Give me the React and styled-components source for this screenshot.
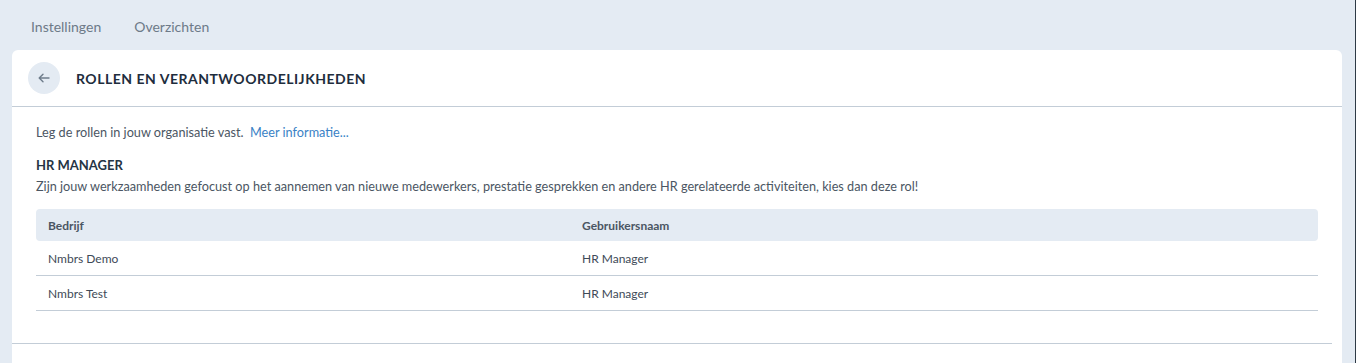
import React from "react";
import styled, { createGlobalStyle } from "styled-components";

const GlobalStyle = createGlobalStyle`
  html, body {
    margin: 0;
    padding: 0;
    background: #e4ebf3;
    font-family: Lato, "Open Sans", sans-serif;
  }
`;

const rows = [
  { company: "Nmbrs Demo", user: "HR Manager" },
  { company: "Nmbrs Test", user: "HR Manager" },
];

export default function App() {
  return (
    <Page>
      <GlobalStyle />
      <Tabs>
        <Tab>Instellingen</Tab>
        <Tab>Overzichten</Tab>
      </Tabs>
      <Card>
        <Header>
          <BackButton aria-label="Terug">
            <svg width="14" height="14" viewBox="0 0 14 14" fill="none">
              <path
                d="M12 7H2.5M6 3.2L2.2 7L6 10.8"
                stroke="#6f7d8c"
                strokeWidth="1.4"
                strokeLinecap="round"
                strokeLinejoin="round"
              />
            </svg>
          </BackButton>
          <Title>ROLLEN EN VERANTWOORDELIJKHEDEN</Title>
        </Header>
        <Body>
          <Intro>
            Leg de rollen in jouw organisatie vast.&nbsp; <MoreLink href="#">Meer informatie...</MoreLink>
          </Intro>
          <RoleTitle>HR MANAGER</RoleTitle>
          <RoleText>
            Zijn jouw werkzaamheden gefocust op het aannemen van nieuwe medewerkers, prestatie gesprekken en andere HR gerelateerde activiteiten, kies dan deze rol!
          </RoleText>
          <Table>
            <thead>
              <tr>
                <Th $first>Bedrijf</Th>
                <Th>Gebruikersnaam</Th>
              </tr>
            </thead>
            <tbody>
              {rows.map((r) => (
                <tr key={r.company}>
                  <Td $first>{r.company}</Td>
                  <Td>{r.user}</Td>
                </tr>
              ))}
            </tbody>
          </Table>
        </Body>
        <Footer />
      </Card>
    </Page>
  );
}

const Page = styled.div`
  min-height: 363px;
  padding: 0 13px 0 12px;
  border-right: 1px solid #2e3a46;
  box-sizing: border-box;
`;

const Tabs = styled.div`
  display: flex;
  gap: 33px;
  height: 50px;
  align-items: center;
  padding: 2px 0 0 19px;
  box-sizing: border-box;
`;

const Tab = styled.div`
  font-size: 14px;
  color: #6d7a88;
`;

const Card = styled.div`
  background: #fff;
  border-radius: 6px 6px 0 0;
  min-height: 313px;
`;

const Header = styled.div`
  display: flex;
  align-items: center;
  gap: 16px;
  height: 56px;
  padding: 0 16px;
  border-bottom: 1px solid #c3cdd7;
`;

const BackButton = styled.button`
  width: 32px;
  height: 32px;
  border-radius: 50%;
  border: none;
  background: #e4ebf3;
  display: flex;
  align-items: center;
  justify-content: center;
  padding: 0;
  cursor: pointer;
`;

const Title = styled.h1`
  margin: 0;
  font-size: 14px;
  font-weight: 700;
  color: #1e2d3d;
  letter-spacing: 0.5px;
`;

const Body = styled.div`
  padding: 17px 24px 32px 24px;
`;

const Intro = styled.p`
  margin: 0 0 17px;
  font-size: 12.7px;
  color: #4b5663;
  line-height: 16px;
`;

const MoreLink = styled.a`
  color: #3a82c6;
  text-decoration: none;
`;

const RoleTitle = styled.h2`
  margin: 0 0 5px;
  font-size: 13px;
  font-weight: 700;
  color: #253444;
  line-height: 16px;
`;

const RoleText = styled.p`
  margin: 0 0 15px;
  font-size: 12.7px;
  color: #4b5663;
  line-height: 16px;
`;

const Table = styled.table`
  width: 100%;
  border-collapse: separate;
  border-spacing: 0;
  font-size: 12px;
`;

const Th = styled.th`
  text-align: left;
  height: 32px;
  padding: 0 12px;
  font-weight: 700;
  color: #4b5663;
  background: #e4ebf3;
  width: ${(p) => (p.$first ? "510px" : "auto")};
  border-radius: ${(p) => (p.$first ? "4px 0 0 4px" : "0 4px 4px 0")};
`;

const Td = styled.td`
  height: 34px;
  padding: 0 12px;
  color: #3e4a57;
  border-bottom: 1px solid #c3cdd7;
`;

const Footer = styled.div`
  margin-right: 10px;
  border-top: 1px solid #c3cdd7;
`;
